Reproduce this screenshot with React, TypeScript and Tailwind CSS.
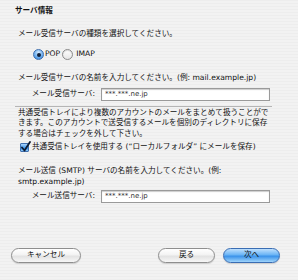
import { ReactNode } from 'react';

const FONT = "font-['DejaVu_Sans','Noto_Sans_CJK_JP',sans-serif]";

function Radio({ checked }: { checked?: boolean }) {
  if (checked) {
    return (
      <span className="flex h-[11px] w-[11px] shrink-0 items-center justify-center rounded-full border border-[#3f6fae] bg-[radial-gradient(circle_at_50%_30%,#d7ecff_0%,#6fb0ef_55%,#2d7fd8_100%)]">
        <span className="block h-[4px] w-[4px] rounded-full bg-[#10203a]" />
      </span>
    );
  }
  return (
    <span className="block h-[11px] w-[11px] shrink-0 rounded-full border border-[#8b8b8b] bg-[linear-gradient(#ffffff,#e6e6e6)] shadow-[inset_0_1px_1px_rgba(0,0,0,0.15)]" />
  );
}

function Checkbox() {
  return (
    <span className="relative block h-[9px] w-[9px] shrink-0 rounded-[1px] border border-[#3f6fae] bg-[linear-gradient(#a9d3fb,#4c9ff0_50%,#2d85e6_55%,#8ccaf9)]">
      <svg className="absolute -left-[1px] -top-[3px]" width="12" height="12" viewBox="0 0 12 12">
        <path d="M2 6.5 L4.5 9.5 L10 1" fill="none" stroke="#0d1a30" strokeWidth="1.8" strokeLinecap="round" strokeLinejoin="round" />
      </svg>
    </span>
  );
}

function Field({ label, value }: { label: string; value: string }) {
  return (
    <div className="flex items-center">
      <span className="w-[97px] pr-[2px] text-right">{label}</span>
      <div className="ml-[4px] flex h-[13px] w-[169px] items-center border border-[#9a9a9a] bg-white pl-[3px] text-[7px] text-[#333] shadow-[inset_0_1px_1px_rgba(0,0,0,0.2)]">
        {value}
      </div>
    </div>
  );
}

function Button({ children, primary, className }: { children: ReactNode; primary?: boolean; className?: string }) {
  const look = primary
    ? 'border-[#3a6db3] bg-[linear-gradient(#bfe0fd,#6ab4f5_45%,#3a92ea_55%,#9fd4fb)]'
    : 'border-[#8e8e8e] bg-[linear-gradient(#ffffff,#f3f3f3_45%,#e2e2e2_55%,#f7f7f7)]';
  return (
    <div className={`flex h-[15px] items-center justify-center rounded-full border shadow-[0_1px_1px_rgba(0,0,0,0.15)] ${look} ${className ?? ''}`}>
      {children}
    </div>
  );
}

export default function App() {
  return (
    <div
      className={`relative h-[280px] w-[298px] overflow-hidden bg-[image:repeating-linear-gradient(0deg,#ededed_0px,#ededed_1px,#f2f2f2_1px,#f2f2f2_3px)] text-[7.6px] leading-[10.5px] text-[#111] ${FONT}`}
    >
      <div className="flex flex-col">
        <div className="ml-[15px] mt-[6px] font-bold">サーバ情報</div>

        <div className="ml-[18px] mt-[12px]">メール受信サーバの種類を選択してください。</div>

        <div className="ml-[33px] mt-[10px] flex h-[11px] items-center">
          <Radio checked />
          <span className="ml-[1px]">POP</span>
          <span className="ml-[2px] block"><Radio /></span>
          <span className="ml-[3px]">IMAP</span>
        </div>

        <div className="ml-[18px] mt-[13px]">メール受信サーバの名前を入力してください。(例: mail.example.jp)</div>

        <div className="mt-[4px]">
          <Field label="メール受信サーバ:" value="***.***.ne.jp" />
        </div>

        <div className="ml-[15px] mt-[5px] h-px w-[257px] bg-[#b5b5b5]" />

        <div className="ml-[18px] mt-[1px]">
          共通受信トレイにより複数のアカウントのメールをまとめて扱うことがで
          <br />
          きます。このアカウントで送受信するメールを個別のディレクトリに保存
          <br />
          する場合はチェックを外して下さい。
        </div>

        <div className="ml-[20px] mt-[3px] flex h-[10px] items-center">
          <Checkbox />
          <span className="ml-[3px]">共通受信トレイを使用する (“ローカルフォルダ” にメールを保存)</span>
        </div>

        <div className="ml-[18px] mt-[14px]">
          メール送信 (SMTP) サーバの名前を入力してください。(例:
          <br />
          smtp.example.jp)
        </div>

        <div className="mt-[3px]">
          <Field label="メール送信サーバ:" value="***.***.ne.jp" />
        </div>

        <div className="mt-[45px] flex items-center">
          <Button className="ml-[11px] w-[70px]">キャンセル</Button>
          <Button className="ml-[77px] w-[57px]">戻る</Button>
          <Button primary className="ml-[8px] w-[57px]">次へ</Button>
        </div>
      </div>
    </div>
  );
}
